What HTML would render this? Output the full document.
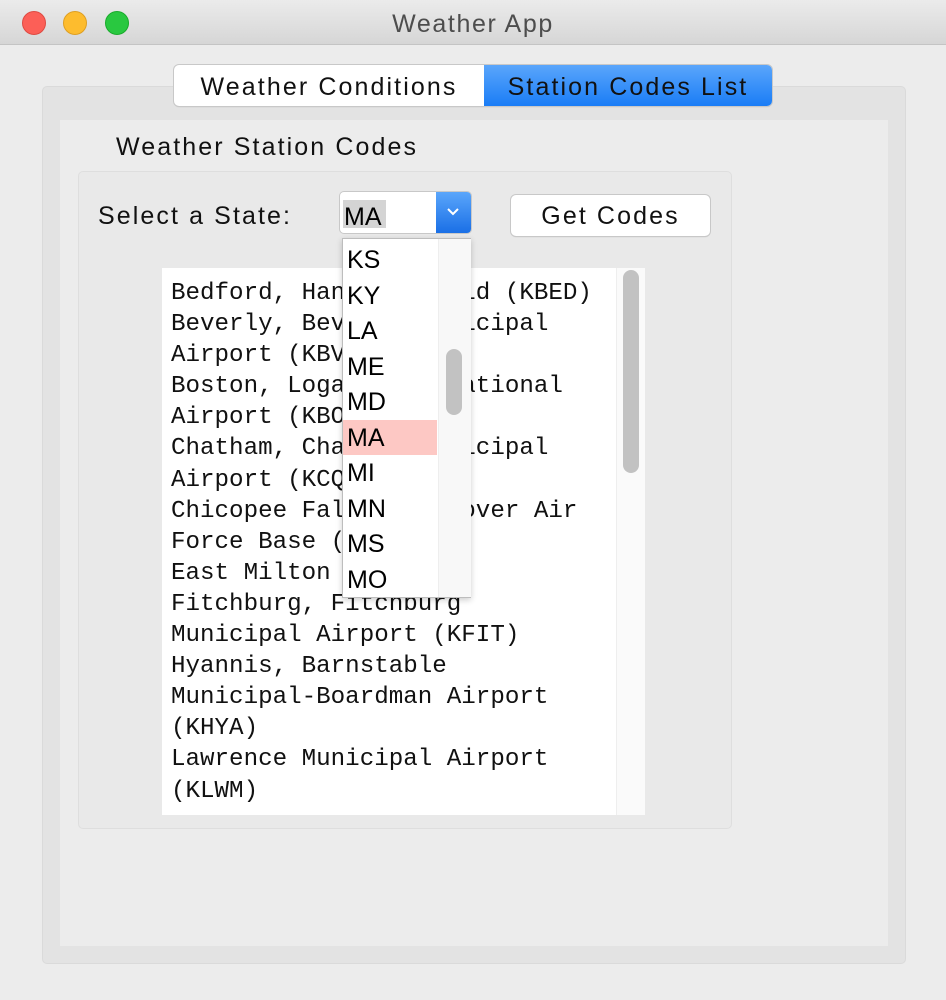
<!DOCTYPE html>
<html><head><style>
*{margin:0;padding:0;box-sizing:border-box}
body{width:946px;height:1000px;background:#ececec;font-family:"Liberation Sans",sans-serif;position:relative;overflow:hidden}
.a{position:absolute}
.sp{letter-spacing:2.1px}
.title{left:0;top:0;width:946px;height:45px;background:linear-gradient(#ebebeb,#d6d6d6);border-bottom:1px solid #c4c4c4;text-align:center;font-size:25px;line-height:48px;color:#4d4d4d;letter-spacing:1.6px}
.dot{width:24px;height:24px;border-radius:50%;top:11px}
.mono{font-family:"Liberation Mono",monospace;font-size:24.2px;line-height:31.1px;color:#111;white-space:pre}
.dd div{height:35.5px;font-size:25px;line-height:36px;padding-left:4px;color:#000}
</style></head><body>
<div class="a title">Weather App</div>
<div class="a dot" style="left:22px;background:#fc5f57;border:1px solid #de4a42"></div>
<div class="a dot" style="left:63px;background:#fdbc2e;border:1px solid #de9f22"></div>
<div class="a dot" style="left:105px;background:#29c840;border:1px solid #1aab2c"></div>
<div class="a" style="left:42px;top:86px;width:864px;height:878px;background:#e3e3e3;border:1px solid #dadada;border-radius:5px"></div>
<div class="a" style="left:60px;top:120px;width:828px;height:826px;background:#ececec"></div>
<div class="a sp" style="left:174px;top:65px;width:598px;height:41px;border-radius:5px;background:#fff;box-shadow:0 0 0 1px #c8c8c8,0 1px 1px #bbb;overflow:hidden;font-size:25px;line-height:44px">
<div class="a" style="left:0;top:0;width:310px;height:41px;text-align:center;color:#111">Weather Conditions</div>
<div class="a" style="left:310px;top:0;width:288px;height:41px;text-align:center;color:#111;background:linear-gradient(#5aa6fb,#1a7df6)">Station Codes List</div>
</div>
<div class="a sp" style="left:116px;top:133px;font-size:25px;color:#111">Weather Station Codes</div>
<div class="a" style="left:78px;top:171px;width:654px;height:658px;border:1px solid #dedede;border-radius:5px;background:#e9e9e9"></div>
<div class="a sp" style="left:98px;top:202px;font-size:25px;color:#111">Select a State:</div>
<div class="a" style="left:340px;top:192px;width:131px;height:41px;background:#fff;border-radius:4px;box-shadow:0 0 0 1px #c8c8c8;overflow:hidden">
<div class="a" style="left:3px;top:8px;width:43px;height:28px;background:#d4d4d4"></div>
<div class="a" style="left:4px;top:9px;font-size:25px;line-height:32px;color:#000">MA</div>
<div class="a" style="left:96px;top:0;width:35px;height:41px;background:linear-gradient(#5aa6fb,#1a6fe6)"></div>
<svg class="a" style="left:106px;top:15px" width="14" height="10"><path d="M2 2 L7 7 L12 2" stroke="#fff" stroke-width="2" fill="none"/></svg>
</div>
<div class="a sp" style="left:511px;top:195px;width:199px;height:41px;background:#fff;border-radius:5px;box-shadow:0 0 0 1px #c8c8c8,0 1px 1px #bbb;text-align:center;font-size:25px;line-height:43px;color:#111">Get Codes</div>
<div class="a" style="left:162px;top:268px;width:483px;height:547px;background:#fff"></div>
<div class="a" style="left:616px;top:268px;width:29px;height:547px;background:#fafafa;border-left:1px solid #eee"></div>
<div class="a" style="left:623px;top:270px;width:16px;height:203px;background:#c2c2c2;border-radius:8px"></div>
<div class="a mono" style="left:171px;top:278px">Bedford, Hanscom Field (KBED)
Beverly, Beverly Municipal
Airport (KBVY)
Boston, Logan International
Airport (KBOS)
Chatham, Chatham Municipal
Airport (KCQX)
Chicopee Falls, Westover Air
Force Base (KCEF)
East Milton (KMQE)
Fitchburg, Fitchburg
Municipal Airport (KFIT)
Hyannis, Barnstable
Municipal-Boardman Airport
(KHYA)
Lawrence Municipal Airport
(KLWM)</div>
<div class="a dd" style="left:342px;top:238px;width:129px;height:360px;background:#fff;border:1px solid #bdbdbd;box-shadow:0 2px 6px rgba(0,0,0,.2);padding-top:3px">
<div class="a" style="left:95px;top:0;width:33px;height:358px;background:#f8f8f8;border-left:1px solid #eee"></div>
<div class="a" style="left:103px;top:110px;width:16px;height:66px;background:#c2c2c2;border-radius:8px"></div>
<div style="width:94px">KS</div><div style="width:94px">KY</div><div style="width:94px">LA</div><div style="width:94px">ME</div><div style="width:94px">MD</div><div style="width:94px;background:#fdc8c4">MA</div><div style="width:94px">MI</div><div style="width:94px">MN</div><div style="width:94px">MS</div><div style="width:94px">MO</div>
</div>
</body></html>
